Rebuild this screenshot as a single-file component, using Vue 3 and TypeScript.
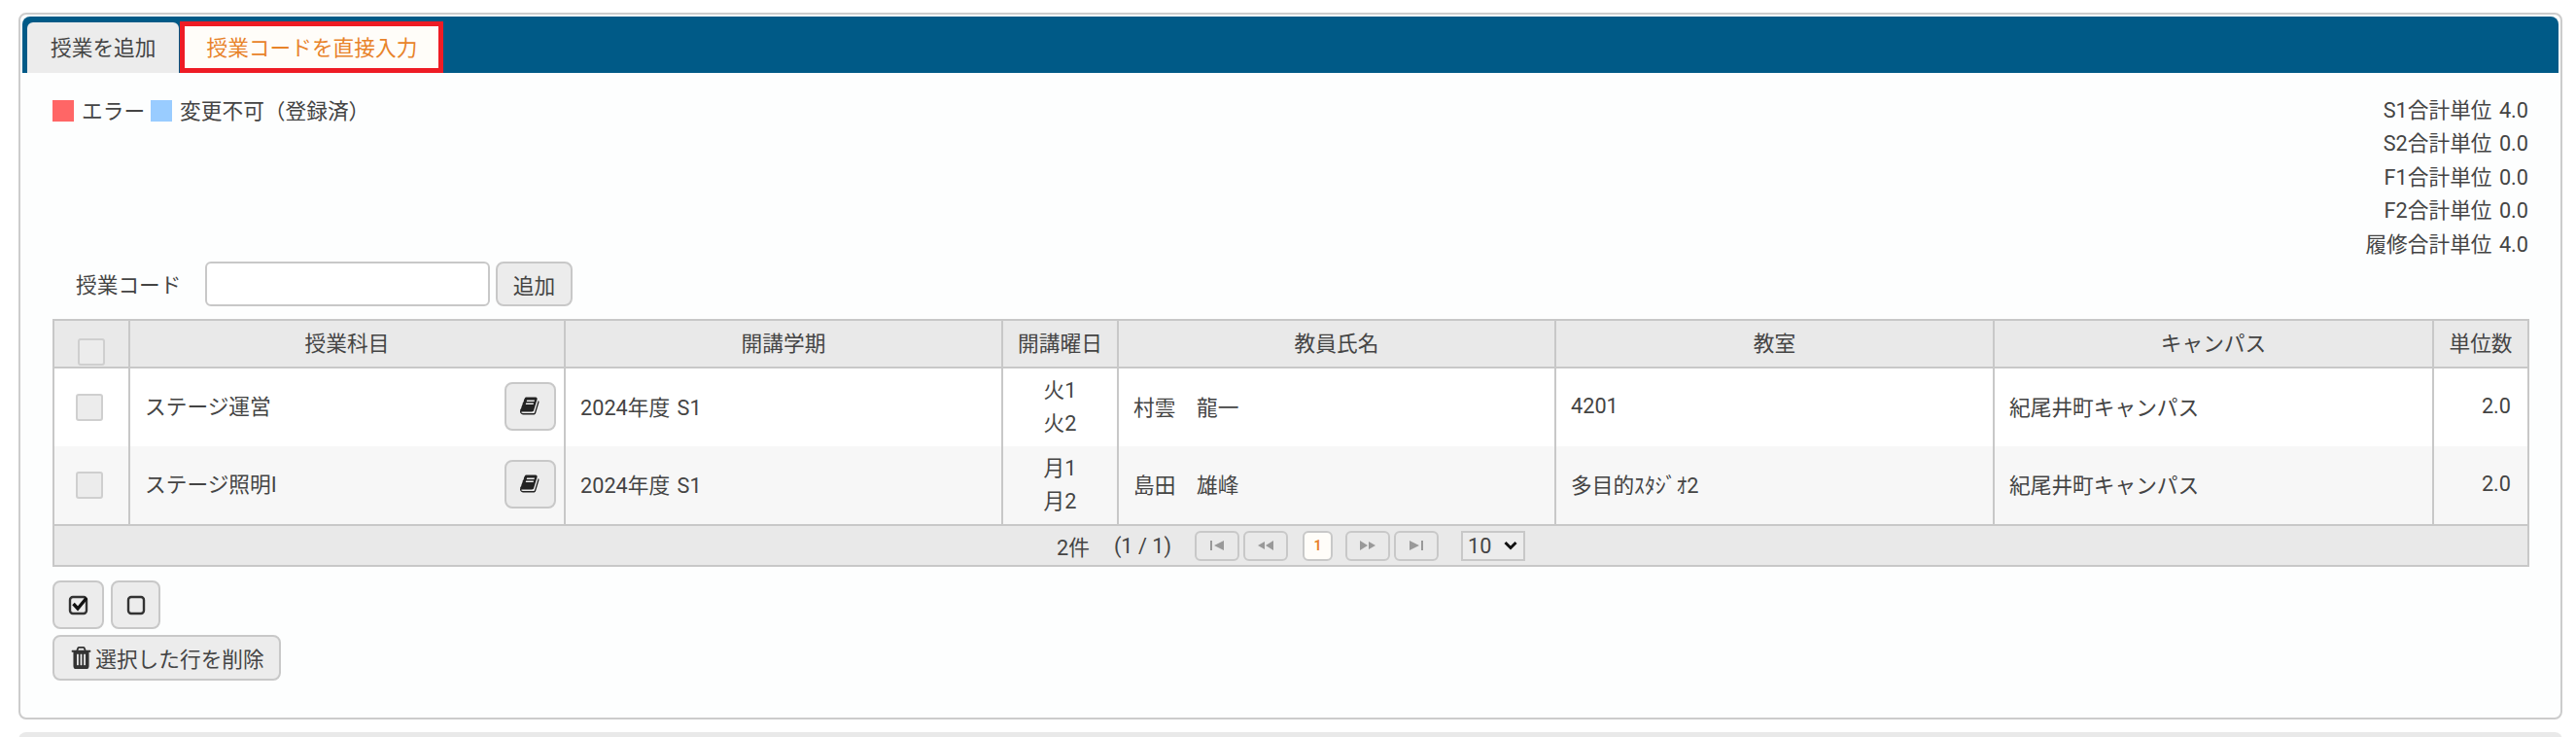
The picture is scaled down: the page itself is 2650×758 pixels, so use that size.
<script setup lang="ts">
interface Row { subject: string; periods: string[]; teacher: string; room: string }
const rows: Row[] = [
  { subject: 'ステージ運営', periods: ['火1', '火2'], teacher: '村雲　龍一', room: '4201' },
  { subject: 'ステージ照明I', periods: ['月1', '月2'], teacher: '島田　雄峰', room: '多目的ｽﾀｼﾞｵ2' },
]
const totals = ['S1合計単位 4.0', 'S2合計単位 0.0', 'F1合計単位 0.0', 'F2合計単位 0.0', '履修合計単位 4.0']
const heads = ['授業科目', '開講学期', '開講曜日', '教員氏名', '教室', 'キャンパス', '単位数']
const widths = [78, 448, 450, 119, 450, 451, 452, 98]
const book = 'M1639 478q40 57 18 129l-275 906q-19 64-76.5 107.5t-122.5 43.5h-923q-77 0-148.5-53.5t-99.5-131.5q-24-67-2-127 0-4 3-27t4-37q1-8-3-21.5t-3-19.5q2-11 8-21t16.5-23.5 16.5-23.5q23-38 45-91.5t30-91.5q3-10 .5-30t-.5-28q3-11 17-28t17-23q21-36 42-92t25-90q1-9-2.5-32t.5-28q4-13 22-30.5t22-22.5q19-26 42.5-84.5t27.5-96.5q1-8-3-25.5t-2-26.5q2-8 9-18t18-23 17-21q8-12 16.5-30.5t15-35 16-36 19.5-32 26.5-23.5 36-11.5 47.5 5.5l-1 3q38-9 51-9h761q74 0 114 56t18 130l-274 906q-36 119-71.5 153.5t-128.5 34.5h-869q-27 0-38 15-11 16-1 43 24 70 144 70h923q29 0 56-15.5t35-41.5l300-987q7-22 5-57 38 15 59 43zm-1064 2q-4 13 2 22.5t20 9.5h608q13 0 25.5-9.5t16.5-22.5l21-64q4-13-2-22.5t-20-9.5h-608q-13 0-25.5 9.5t-16.5 22.5zm-83 256q-4 13 2 22.5t20 9.5h608q13 0 25.5-9.5t16.5-22.5l21-64q4-13-2-22.5t-20-9.5h-608q-13 0-25.5 9.5t-16.5 22.5z'
const trash = 'M704 1376v-704q0-14-9-23t-23-9h-64q-14 0-23 9t-9 23v704q0 14 9 23t23 9h64q14 0 23-9t9-23zm256 0v-704q0-14-9-23t-23-9h-64q-14 0-23 9t-9 23v704q0 14 9 23t23 9h64q14 0 23-9t9-23zm256 0v-704q0-14-9-23t-23-9h-64q-14 0-23 9t-9 23v704q0 14 9 23t23 9h64q14 0 23-9t9-23zm-544-992h448l-48-117q-7-9-17-11h-317q-10 2-17 11zm928 32v64q0 14-9 23t-23 9h-96v948q0 83-47 143.5t-113 60.5h-832q-66 0-113-58.5t-47-141.5v-952h-96q-14 0-23-9t-9-23v-64q0-14 9-23t23-9h309l70-167q15-37 54-63t79-26h320q40 0 79 26t54 63l70 167h309q14 0 23 9t9 23z'
</script>

<template>
  <div class="page">
    <section class="panel">
      <nav class="tabbar">
        <div class="tab">授業を追加</div>
        <div class="tab active">授業コードを直接入力</div>
      </nav>
      <div class="content">
        <div class="top">
          <div class="legend">
            <i class="swatch red"></i><span class="legend-text first">エラー</span>
            <i class="swatch blue"></i><span class="legend-text">変更不可（登録済）</span>
          </div>
          <div class="totals">
            <div v-for="t in totals" :key="t">{{ t }}</div>
          </div>
        </div>
        <div class="code-form">
          <label class="code-label">授業コード</label>
          <input class="code-input" type="text" />
          <button class="btn add">追加</button>
        </div>
        <table class="grid">
          <colgroup>
            <col v-for="(w, i) in widths" :key="i" :style="{ width: w + 'px' }" />
          </colgroup>
          <thead>
            <tr>
              <th><span class="cb head-cb"></span></th>
              <th v-for="h in heads" :key="h">{{ h }}</th>
            </tr>
          </thead>
          <tbody>
            <tr v-for="(r, i) in rows" :key="r.subject" :class="{ odd: i === 1 }">
              <td class="center"><span class="cb"></span></td>
              <td>
                <div class="subject">
                  <span class="subject-name">{{ r.subject }}</span>
                  <button class="btn book">
                    <svg width="21" height="21" viewBox="0 0 1792 1792"><path :d="book" fill="#222" /></svg>
                  </button>
                </div>
              </td>
              <td>2024年度 S1</td>
              <td class="center">
                <div v-for="p in r.periods" :key="p" class="period">{{ p }}</div>
              </td>
              <td>{{ r.teacher }}</td>
              <td>{{ r.room }}</td>
              <td>紀尾井町キャンパス</td>
              <td class="right">2.0</td>
            </tr>
          </tbody>
          <tfoot>
            <tr>
              <td colspan="8" class="foot">
                <div class="pager">
                  <span class="count">2件</span>
                  <span class="pages">(1 / 1)</span>
                  <div class="pbtns first-group">
                    <span class="pbtn"><svg width="16" height="14" viewBox="0 0 16 14"><path d="M1 2h2v10H1zM15 2v10L5 7z" fill="#999" /></svg></span>
                    <span class="pbtn"><svg width="18" height="14" viewBox="0 0 18 14"><path d="M17 2v10L9 7zM8 3v8L1 7z" fill="#999" /></svg></span>
                  </div>
                  <span class="pcur">1</span>
                  <div class="pbtns">
                    <span class="pbtn"><svg width="18" height="14" viewBox="0 0 18 14"><path d="M1 2v10l8-5zM10 3v8l7-4z" fill="#999" /></svg></span>
                    <span class="pbtn"><svg width="16" height="14" viewBox="0 0 16 14"><path d="M1 2v10l10-5zM13 2h2v10h-2z" fill="#999" /></svg></span>
                  </div>
                  <select class="psize">
                    <option>10</option>
                  </select>
                </div>
              </td>
            </tr>
          </tfoot>
        </table>
        <div class="actions">
          <div class="action-row">
            <button class="btn square">
              <svg width="24" height="24" viewBox="0 0 24 24" fill="none">
                <rect x="3" y="4" width="17" height="17" rx="3" stroke="#333" stroke-width="2.4" />
                <path d="M6.5 11l4.5 5 9-11" stroke="#111" stroke-width="3.4" />
              </svg>
            </button>
            <button class="btn square narrow">
              <svg width="24" height="24" viewBox="0 0 24 24" fill="none">
                <rect x="4" y="4" width="16" height="17" rx="3" stroke="#333" stroke-width="2.4" />
              </svg>
            </button>
          </div>
          <button class="btn del">
            <svg width="25" height="27" viewBox="0 0 1792 1792" preserveAspectRatio="none"><path :d="trash" fill="#333" /></svg>
            <span>選択した行を削除</span>
          </button>
        </div>
      </div>
    </section>
    <div class="next-panel"></div>
  </div>
</template>

<style>
html, body { margin: 0; background: #fff; overflow: hidden; }
</style>

<style scoped>
.page {
  height: 758px;
  box-sizing: border-box;
  padding: 13px 14px 0 19px;
  font-family: Roboto, "Noto Sans CJK JP", sans-serif;
  font-size: 21.7px;
  word-spacing: 2px;
  color: #444;
  overflow: hidden;
}
.panel {
  height: 727px;
  box-sizing: border-box;
  padding: 2px;
  background: #fdfefe;
  border: 2px solid #ccc;
  border-radius: 8px;
}
.next-panel {
  height: 20px;
  margin-top: 13px;
  background: #e9e9e9;
  border-radius: 8px 8px 0 0;
}
.tabbar {
  display: flex;
  align-items: flex-end;
  height: 58px;
  box-sizing: border-box;
  padding-left: 5px;
  background: #005a87;
  border-radius: 8px 8px 0 0;
}
.tab {
  height: 52px;
  box-sizing: border-box;
  padding: 0 24px;
  line-height: 53px;
  background: #ececec;
  border-radius: 6px 6px 0 0;
  white-space: nowrap;
}
.tab.active {
  height: 53px;
  margin-left: 1px;
  width: 271px;
  padding: 0 22px;
  line-height: 45px;
  color: #e8832a;
  background: #fffdf9;
  border: 5px solid #ee1c25;
  border-radius: 0;
}
.content { padding: 22px 31px 0 31px; }
.top { display: flex; justify-content: space-between; align-items: flex-start; }
.legend { display: flex; align-items: center; height: 34.5px; }
.swatch { width: 22px; height: 22px; margin-right: 8px; display: block; }
.red { background: #ff6666; }
.blue { background: #99ccff; }
.legend-text { padding-bottom: 3px; }
.legend-text.first { margin-right: 6px; }
.totals { text-align: right; line-height: 34.4px; }
.code-form { display: flex; align-items: center; height: 46px; padding-left: 24px; }
.code-label { width: 133px; padding-bottom: 2px; }
.code-input {
  width: 293px;
  height: 46px;
  box-sizing: border-box;
  border: 2px solid #c8c8c8;
  border-radius: 6px;
  background: #fff;
  outline: none;
  margin-right: 6px;
}
.btn {
  box-sizing: border-box;
  padding: 0;
  background: #ececec;
  border: 2px solid #c8c8c8;
  border-radius: 8px;
  color: #444;
  font: inherit;
  word-spacing: inherit;
  display: inline-flex;
  align-items: center;
  justify-content: center;
}
.add { width: 79px; height: 46px; }
.grid {
  margin-top: 13px;
  table-layout: fixed;
  border-collapse: collapse;
  width: 2546px;
}
.grid th, .grid td { border: 2px solid #c8c8c8; padding: 0 16px 0 15px; }
.grid th {
  height: 42px;
  background: #e9e9e9;
  font-weight: 400;
  padding: 0 0 5px;
}
.grid th:first-child { padding: 0; vertical-align: bottom; }
.grid tbody td { height: 77px; padding-bottom: 3px; background: #fff; border-top: 0; border-bottom: 0; }
.grid tbody tr.odd td { background: #f7f7f7; border-bottom: 2px solid #c8c8c8; }
.center { text-align: center; padding: 0 !important; }
.right { text-align: right; padding-right: 17px !important; }
.cb {
  display: block;
  width: 28px;
  height: 28px;
  margin: 0 auto 0 22px;
  box-sizing: border-box;
  background: #ececec;
  border: 2px solid #cfcfcf;
  border-radius: 3px;
}
.head-cb { margin: 0 0 1px 24px; }
.subject { display: flex; align-items: center; justify-content: space-between; margin-right: -8px; }
.subject-name { padding-bottom: 2px; }
.book { width: 53px; height: 50px; }
.period { line-height: 34.5px; }
.grid td.foot { background: #e9e9e9; padding: 0; height: 40px; }
.pager { display: flex; align-items: center; justify-content: center; height: 40px; word-spacing: 0; }
.count { margin-right: 25px; }
.pbtns { display: flex; gap: 4px; }
.first-group { margin-left: 24px; }
.pbtn, .pcur {
  display: inline-flex;
  align-items: center;
  justify-content: center;
  box-sizing: border-box;
  height: 31px;
  width: 46px;
  border: 2px solid #c8c8c8;
  border-radius: 6px;
}
.pcur {
  width: 31px;
  margin: 0 13px 0 15px;
  background: #fffdf9;
  color: #e8832a;
  font-size: 14px;
  font-weight: 700;
}
.psize {
  appearance: none;
  width: 66px;
  height: 31px;
  margin-left: 23px;
  box-sizing: border-box;
  border: 2px solid #c8c8c8;
  border-radius: 0;
  background-color: #ececec;
  background-image: url("data:image/svg+xml,%3Csvg xmlns='http://www.w3.org/2000/svg' width='14' height='10' viewBox='0 0 14 10'%3E%3Cpath d='M1.5 2l5.500 5.500L12.500 2' fill='none' stroke='%23111' stroke-width='3'/%3E%3C/svg%3E");
  background-repeat: no-repeat;
  background-position: right 6px center;
  color: #444;
  font: inherit;
  padding: 0 0 0 5px;
}
.actions { margin-top: 14px; display: flex; flex-direction: column; gap: 6px; align-items: flex-start; }
.action-row { display: flex; gap: 7px; }
.square { width: 53px; height: 50px; }
.square.narrow { width: 51px; }
.del { width: 235px; height: 47px; gap: 2px; }
</style>
